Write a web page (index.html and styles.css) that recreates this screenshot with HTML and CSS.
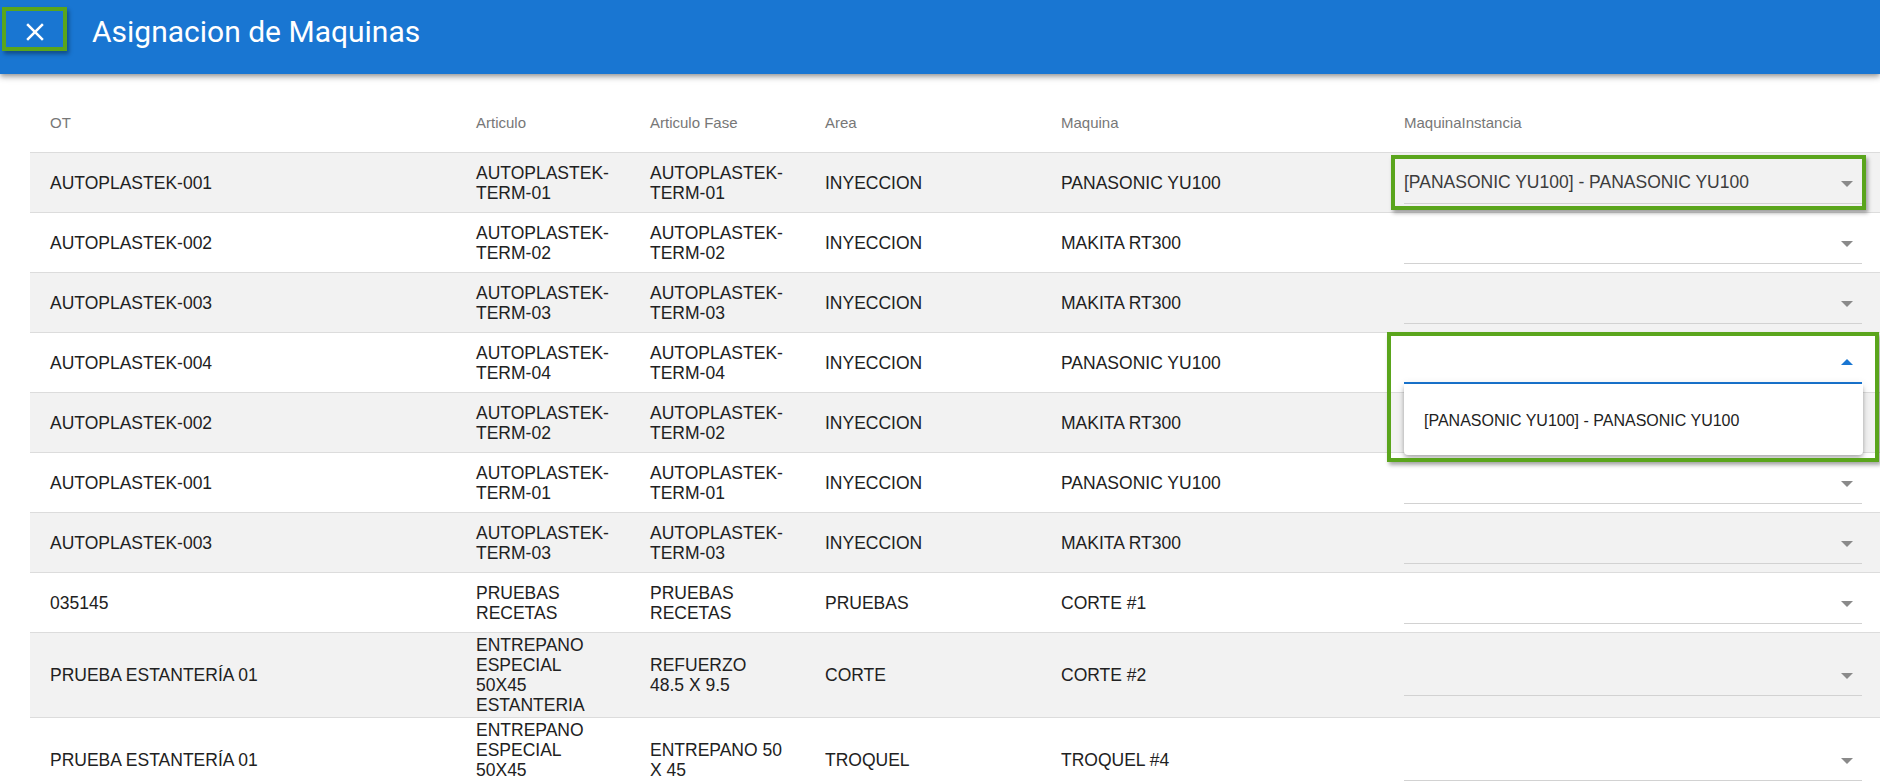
FILE: index.html
```html
<!DOCTYPE html>
<html lang="es">
<head>
<meta charset="utf-8">
<title>Asignacion de Maquinas</title>
<link rel="stylesheet" href="styles.css">
</head>
<body>
<header class="toolbar">
  <button class="close-btn" aria-label="Cerrar">
    <svg class="close-icon" viewBox="0 0 24 24" width="30" height="30"><path d="M19 6.41L17.59 5 12 10.59 6.41 5 5 6.41 10.59 12 5 17.59 6.41 19 12 13.41 17.59 19 19 17.59 13.41 12z" fill="#fff"/></svg>
    <span class="mark mark-close"></span>
  </button>
  <h1 class="title">Asignacion de Maquinas</h1>
</header>
<main class="content">
  <div class="table">
    <div class="row head">
      <div class="cell c1">OT</div>
      <div class="cell c2">Articulo</div>
      <div class="cell c3">Articulo Fase</div>
      <div class="cell c4">Area</div>
      <div class="cell c5">Maquina</div>
      <div class="cell c6">MaquinaInstancia</div>
    </div>

    <div class="row odd">
      <div class="cell c1">AUTOPLASTEK-001</div>
      <div class="cell c2">AUTOPLASTEK-TERM-01</div>
      <div class="cell c3">AUTOPLASTEK-TERM-01</div>
      <div class="cell c4">INYECCION</div>
      <div class="cell c5">PANASONIC YU100</div>
      <div class="cell c6">
        <div class="select marked">
          <span class="value">[PANASONIC YU100] - PANASONIC YU100</span>
          <span class="arrow"></span>
          <span class="mark mark-sel1"></span>
        </div>
      </div>
    </div>

    <div class="row">
      <div class="cell c1">AUTOPLASTEK-002</div>
      <div class="cell c2">AUTOPLASTEK-TERM-02</div>
      <div class="cell c3">AUTOPLASTEK-TERM-02</div>
      <div class="cell c4">INYECCION</div>
      <div class="cell c5">MAKITA RT300</div>
      <div class="cell c6"><div class="select"><span class="value"></span><span class="arrow"></span></div></div>
    </div>

    <div class="row odd">
      <div class="cell c1">AUTOPLASTEK-003</div>
      <div class="cell c2">AUTOPLASTEK-TERM-03</div>
      <div class="cell c3">AUTOPLASTEK-TERM-03</div>
      <div class="cell c4">INYECCION</div>
      <div class="cell c5">MAKITA RT300</div>
      <div class="cell c6"><div class="select"><span class="value"></span><span class="arrow"></span></div></div>
    </div>

    <div class="row">
      <div class="cell c1">AUTOPLASTEK-004</div>
      <div class="cell c2">AUTOPLASTEK-TERM-04</div>
      <div class="cell c3">AUTOPLASTEK-TERM-04</div>
      <div class="cell c4">INYECCION</div>
      <div class="cell c5">PANASONIC YU100</div>
      <div class="cell c6">
        <div class="select open">
          <span class="value"></span>
          <span class="arrow up"></span>
          <div class="panel"><div class="option">[PANASONIC YU100] - PANASONIC YU100</div></div>
          <span class="mark mark-sel2"></span>
        </div>
      </div>
    </div>

    <div class="row odd">
      <div class="cell c1">AUTOPLASTEK-002</div>
      <div class="cell c2">AUTOPLASTEK-TERM-02</div>
      <div class="cell c3">AUTOPLASTEK-TERM-02</div>
      <div class="cell c4">INYECCION</div>
      <div class="cell c5">MAKITA RT300</div>
      <div class="cell c6"><div class="select"><span class="value"></span><span class="arrow"></span></div></div>
    </div>

    <div class="row">
      <div class="cell c1">AUTOPLASTEK-001</div>
      <div class="cell c2">AUTOPLASTEK-TERM-01</div>
      <div class="cell c3">AUTOPLASTEK-TERM-01</div>
      <div class="cell c4">INYECCION</div>
      <div class="cell c5">PANASONIC YU100</div>
      <div class="cell c6"><div class="select"><span class="value"></span><span class="arrow"></span></div></div>
    </div>

    <div class="row odd">
      <div class="cell c1">AUTOPLASTEK-003</div>
      <div class="cell c2">AUTOPLASTEK-TERM-03</div>
      <div class="cell c3">AUTOPLASTEK-TERM-03</div>
      <div class="cell c4">INYECCION</div>
      <div class="cell c5">MAKITA RT300</div>
      <div class="cell c6"><div class="select"><span class="value"></span><span class="arrow"></span></div></div>
    </div>

    <div class="row">
      <div class="cell c1">035145</div>
      <div class="cell c2">PRUEBAS RECETAS</div>
      <div class="cell c3">PRUEBAS RECETAS</div>
      <div class="cell c4">PRUEBAS</div>
      <div class="cell c5">CORTE #1</div>
      <div class="cell c6"><div class="select"><span class="value"></span><span class="arrow"></span></div></div>
    </div>

    <div class="row odd">
      <div class="cell c1">PRUEBA ESTANTERÍA 01</div>
      <div class="cell c2">ENTREPANO ESPECIAL 50X45 ESTANTERIA</div>
      <div class="cell c3">REFUERZO 48.5 X 9.5</div>
      <div class="cell c4">CORTE</div>
      <div class="cell c5">CORTE #2</div>
      <div class="cell c6"><div class="select"><span class="value"></span><span class="arrow"></span></div></div>
    </div>

    <div class="row">
      <div class="cell c1">PRUEBA ESTANTERÍA 01</div>
      <div class="cell c2">ENTREPANO ESPECIAL 50X45 ESTANTERIA</div>
      <div class="cell c3">ENTREPANO 50 X 45</div>
      <div class="cell c4">TROQUEL</div>
      <div class="cell c5">TROQUEL #4</div>
      <div class="cell c6"><div class="select"><span class="value"></span><span class="arrow"></span></div></div>
    </div>
  </div>
</main>
</body>
</html>
```
FILE: styles.css
```css
html, body {
  margin: 0;
  padding: 0;
  height: 100%;
  overflow: hidden;
  background: #fff;
}

body {
  font-family: "Liberation Sans", Arial, sans-serif;
  color: #212121;
}

.toolbar {
  position: relative;
  z-index: 5;
  height: 74px;
  box-sizing: border-box;
  padding-bottom: 10px;
  background: #1976d2;
  display: flex;
  align-items: center;
  box-shadow: 0 2px 4px -1px rgba(0,0,0,.25), 0 4px 5px 0 rgba(0,0,0,.16), 0 1px 10px 0 rgba(0,0,0,.12);
}

.close-btn {
  position: relative;
  width: 70px;
  height: 64px;
  margin: 0;
  padding: 0;
  border: 0;
  background: transparent;
  display: flex;
  align-items: center;
  justify-content: center;
}

.close-icon {
  display: block;
}

.title {
  margin: 0 0 0 22px;
  font-family: Roboto, "Liberation Sans", sans-serif;
  font-weight: 400;
  font-size: 30px;
  line-height: 30px;
  color: #fff;
}

.mark {
  position: absolute;
  box-sizing: border-box;
  border: 4px solid #5aa51c;
  box-shadow: 2px 3px 4px rgba(0,0,0,.35);
  z-index: 20;
  pointer-events: none;
}

.mark-close {
  left: 2px;
  top: 7px;
  width: 65px;
  height: 44px;
}

.content {
  padding: 19px 0 0 30px;
}

.row {
  display: grid;
  grid-template-columns: 446px 174px 175px 236px 343px 1fr;
  align-items: center;
  min-height: 60px;
  box-sizing: border-box;
  padding: 2px 0;
  border-bottom: 1px solid #dcdcdc;
  font-size: 17.5px;
  line-height: 20px;
  background: #fff;
}

.row.odd {
  background: #f2f2f2;
}

.row.head {
  font-size: 15px;
  color: #777;
  background: #fff;
}

.c1 { padding-left: 20px; }
.c2 { padding-right: 40px; }
.c3 { padding-right: 41px; }
.c6 { padding-right: 18px; }

.select {
  height: 42px;
  box-sizing: border-box;
  border-bottom: 1px solid #d2d2d2;
  display: flex;
  align-items: center;
  color: #3c3c3c;
}

.select.marked,
.select.open {
  position: relative;
}

.select.open {
  border-bottom: 2px solid #1976d2;
}

.value {
  flex: 1;
  white-space: nowrap;
}

.arrow {
  width: 0;
  height: 0;
  margin: 3px 9px 0 0;
  border-left: 6px solid transparent;
  border-right: 6px solid transparent;
  border-top: 6px solid #8a8a8a;
}

.arrow.up {
  margin-top: 0;
  border-top: 0;
  border-bottom: 6px solid #1976d2;
}

.panel {
  position: absolute;
  top: 100%;
  left: 0;
  right: -1px;
  margin-top: 2px;
  height: 71px;
  box-sizing: border-box;
  padding: 4px 20px 0;
  display: flex;
  align-items: center;
  background: #fff;
  border-radius: 0 0 4px 4px;
  box-shadow: 0 2px 4px -1px rgba(0,0,0,.2), 0 4px 5px 0 rgba(0,0,0,.14), 0 1px 10px 0 rgba(0,0,0,.12);
  z-index: 10;
}

.option {
  font-size: 16px;
  color: #222;
  white-space: nowrap;
}

.mark-sel1 {
  left: -13px;
  right: -4px;
  top: -7px;
  bottom: -7px;
}

.mark-sel2 {
  left: -17px;
  right: -17px;
  top: -10px;
  bottom: -80px;
}
```
